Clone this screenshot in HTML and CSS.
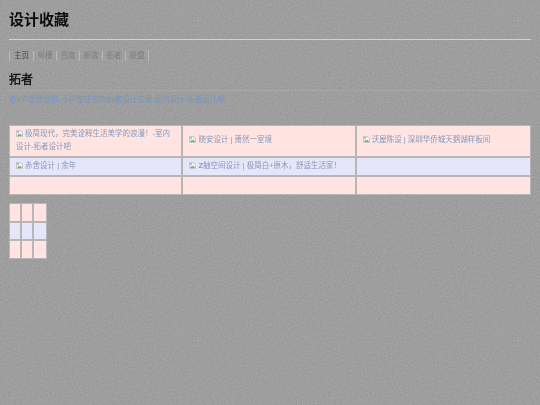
FILE: index.html
```html
<!DOCTYPE html>
<html lang="zh">
<head>
<meta charset="utf-8">
<title>设计收藏</title>
<link rel="stylesheet" href="styles.css">
</head>
<body>
<svg class="noise" width="540" height="405" aria-hidden="true">
  <filter id="grain" x="0" y="0" width="100%" height="100%" color-interpolation-filters="sRGB">
    <feTurbulence type="fractalNoise" baseFrequency="0.8" numOctaves="2" seed="4"/>
    <feColorMatrix type="matrix" values="0.12 0 0 0 0.56  0.12 0 0 0 0.56  0.12 0 0 0 0.56  0 0 0 0 1"/>
  </filter>
  <rect width="540" height="405" filter="url(#grain)"/>
  <symbol id="broken" viewBox="0 0 8 8">
    <path d="M.5.5h5l2 2v5h-7z" fill="#eef0ee" stroke="#a9aeb0" stroke-width=".7"/>
    <path d="M1.2 6.8l2-2.6 1.2 1.2 1-1 1.5 2.4z" fill="#7cae6c"/>
    <path d="M1.2 1.2h2v2h-2z" fill="#8fb4e4"/>
  </symbol>
</svg>
<main class="page">
<h1 class="title">设计收藏</h1>
<hr class="rule">
<nav class="nav">
  <a class="nav-item current">主页</a><a class="nav-item">纵横</a><a class="nav-item">百度</a><a class="nav-item">新浪</a><a class="nav-item">拓者</a><a class="nav-item">联盟</a>
</nav>
<h2 class="section">拓者</h2>
<p class="lead"><a>老K户型优化群-小户型住宅的<b>53</b>套设计方案-室内设计-拓者设计吧</a></p>
<table class="grid wide">
  <tr class="pink">
    <td><a><svg class="ico"><use href="#broken"/></svg> 极简现代，完美诠释生活美学的浪漫！-室内设计-拓者设计吧</a></td>
    <td><a><svg class="ico"><use href="#broken"/></svg> 晓安设计 | 萧然一室境</a></td>
    <td><a><svg class="ico"><use href="#broken"/></svg> 沃屋陈设 | 深圳华侨城天鹅湖样板间</a></td>
  </tr>
  <tr class="blue">
    <td><a><svg class="ico"><use href="#broken"/></svg> 赤舍设计 | 余年</a></td>
    <td><a><svg class="ico"><use href="#broken"/></svg> <b>Z</b>舳空间设计 | 极简白+原木，舒适生活家！</a></td>
    <td></td>
  </tr>
  <tr class="pink empty"><td></td><td></td><td></td></tr>
</table>
<table class="grid small">
  <tr class="pink"><td></td><td></td><td></td></tr>
  <tr class="blue"><td></td><td></td><td></td></tr>
  <tr class="pink"><td></td><td></td><td></td></tr>
</table>
</main>
</body>
</html>
```
FILE: styles.css
```css
html, body { height: 100%; }
body {
  margin: 0;
  overflow: hidden;
  font-family: "Liberation Sans", "Noto Sans CJK SC", sans-serif;
  font-size: 7.5px;
  line-height: 12.5px;
  color: #6d7580;
  background-color: #9c9c9c;
}
.noise { position: absolute; left: 0; top: 0; }
.page {
  position: relative;
  padding: 9px 9px 0;
  filter: blur(0.3px);
}
.title {
  margin: 0;
  font-size: 15px;
  line-height: 22px;
  font-weight: bold;
  color: #0c0c0c;
}
.rule {
  margin: 8px 0 0;
  border: 0;
  height: 1px;
  background: #d2d2d2;
}
.nav {
  display: flex;
  margin-top: 11px;
}
.nav-item {
  padding: 0 3.5px;
  line-height: 10px;
  border-left: 1px solid #bababa;
  color: #7d7d7d;
}
.nav-item:last-child { border-right: 1px solid #bababa; }
.nav-item.current { color: #474747; padding: 0 4px; }
.section {
  margin: 9px 0 0;
  font-size: 12px;
  line-height: 20px;
  font-weight: normal;
  -webkit-text-stroke: 0.3px #0c0c0c;
  color: #0c0c0c;
  border-bottom: 1px solid #a8a8a8;
}
.lead {
  margin: 3px 0 0;
  color: #7296c0;
}
.grid {
  border-collapse: separate;
  border-spacing: 0;
  table-layout: fixed;
  border: 1px solid #b6b6b6;
  background: #b6b6b6;
}
.grid td {
  border-right: 2px solid #b6b6b6;
  border-bottom: 2px solid #b6b6b6;
  vertical-align: middle;
  color: #8598bc;
}
.grid td:last-child { border-right: 0; }
.grid tr:last-child td { border-bottom: 0; }
.wide {
  width: 522px;
  margin-top: 18px;
}
.wide td { padding: 2.5px 8px 2.5px 6px; }
.wide tr.empty td { height: 12px; }
.small {
  width: 38px;
  margin-top: 8px;
}
.small td { height: 16.5px; padding: 0; }
.pink td { background: #ffe4e1; }
.blue td { background: #e6e6fa; }
.ico { width: 7px; height: 7px; vertical-align: -0.5px; }
```
